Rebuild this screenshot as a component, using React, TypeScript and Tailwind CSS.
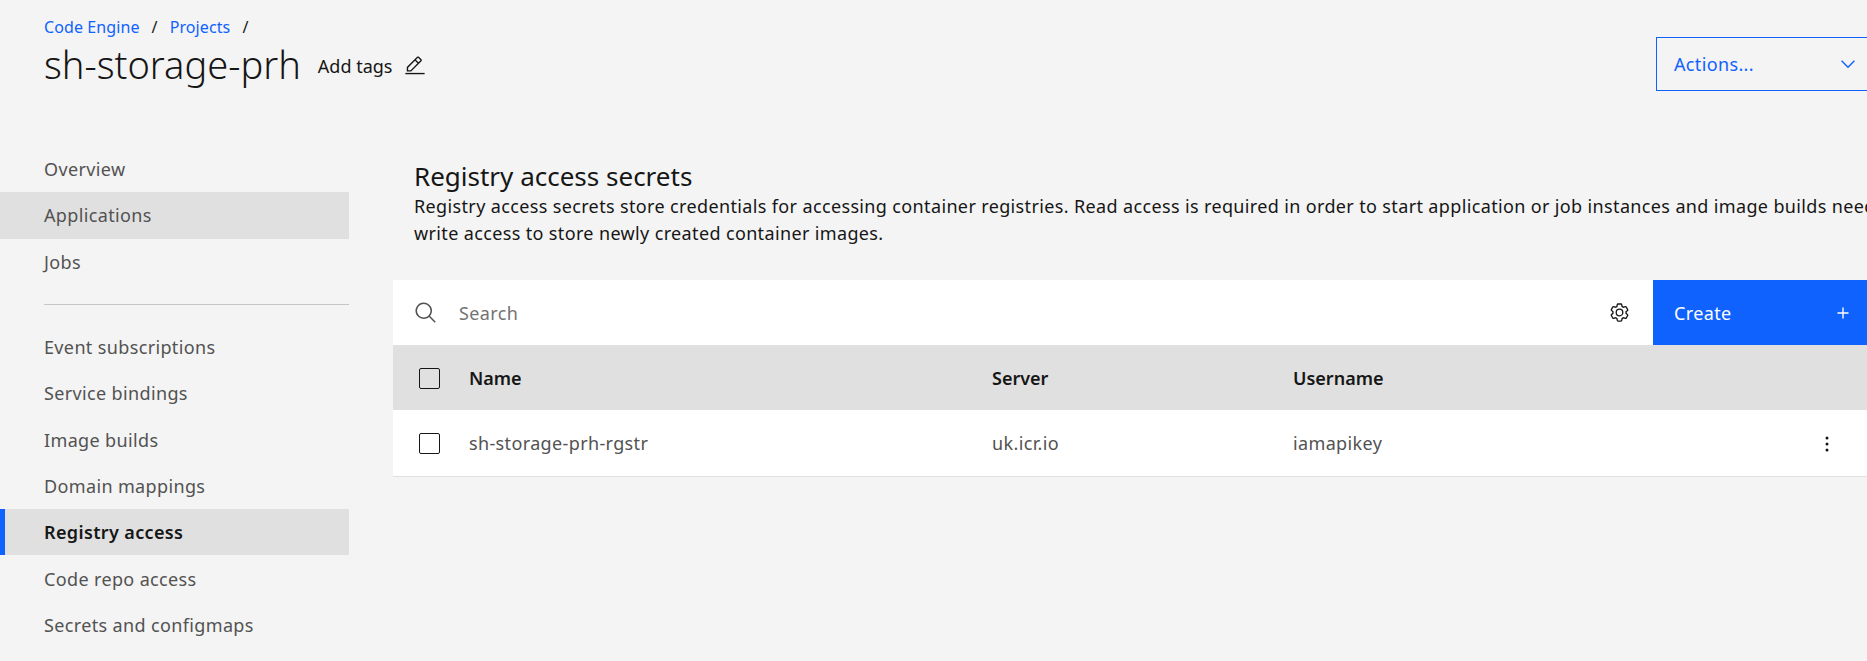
const primaryNav = [
  { label: 'Overview' },
  { label: 'Applications', hovered: true },
  { label: 'Jobs' },
]

const secondaryNav = [
  { label: 'Event subscriptions' },
  { label: 'Service bindings' },
  { label: 'Image builds' },
  { label: 'Domain mappings' },
  { label: 'Registry access', active: true },
  { label: 'Code repo access' },
  { label: 'Secrets and configmaps' },
]

// ─── Icons (Carbon shapes) ────────────────────────────────────────────────────

function Icon({ size, className, children }: { size: number; className?: string; children: React.ReactNode }) {
  return (
    <svg width={size} height={size} viewBox="0 0 32 32" fill="currentColor" className={`shrink-0 ${className ?? ''}`}>
      {children}
    </svg>
  )
}

const EditIcon = () => (
  <Icon size={22} className="ml-[12px] mt-[3px]">
    <path d="M2 26h28v2H2z" />
    <path d="M25.4 9c.8-.8.8-2 0-2.8l-3.6-3.6c-.8-.8-2-.8-2.8 0l-15 15V24h6.4l15-15zm-5-5L24 7.6l-3 3L17.4 7l3-3zM6 22v-3.6l10-10l3.6 3.6l-10 10H6z" />
  </Icon>
)

const SearchIcon = () => (
  <Icon size={24} className="ml-[21px] text-[#525252]">
    <path d="M29 27.5859l-7.5521-7.5521a11.0177 11.0177 0 1 0-1.4141 1.4141L27.5859 29ZM4 13a9 9 0 1 1 9 9A9.01 9.01 0 0 1 4 13Z" />
  </Icon>
)

const SettingsIcon = () => (
  <Icon size={21} className="mr-[23px]">
    <path d="M27,16.76c0-.25,0-.5,0-.76s0-.51,0-.77l1.92-1.68A2,2,0,0,0,29.3,11L26.94,7a2,2,0,0,0-1.73-1,2,2,0,0,0-.64.1l-2.43.82a11.35,11.35,0,0,0-1.31-.75l-.51-2.52a2,2,0,0,0-2-1.61H13.64a2,2,0,0,0-2,1.61l-.51,2.52a11.48,11.48,0,0,0-1.32.75L7.43,6.06A2,2,0,0,0,6.79,6,2,2,0,0,0,5.06,7L2.7,11a2,2,0,0,0,.41,2.51L5,15.24c0,.25,0,.5,0,.76s0,.51,0,.77L3.11,18.45A2,2,0,0,0,2.7,21L5.06,25a2,2,0,0,0,1.73,1,2,2,0,0,0,.64-.1l2.43-.82a11.35,11.35,0,0,0,1.31.75l.51,2.52a2,2,0,0,0,2,1.61h4.72a2,2,0,0,0,2-1.61l.51-2.52a11.48,11.48,0,0,0,1.32-.75l2.42.82a2,2,0,0,0,.64.1,2,2,0,0,0,1.73-1L29.3,21a2,2,0,0,0-.41-2.51ZM25.21,24l-3.43-1.16a8.86,8.86,0,0,1-2.71,1.57L18.36,28H13.64l-.71-3.55a9.36,9.36,0,0,1-2.7-1.57L6.79,24,4.43,20l2.72-2.4a8.9,8.9,0,0,1,0-3.13L4.43,12,6.79,8l3.43,1.16a8.86,8.86,0,0,1,2.71-1.57L13.64,4h4.72l.71,3.55a9.36,9.36,0,0,1,2.7,1.57L25.21,8,27.57,12l-2.72,2.4a8.9,8.9,0,0,1,0,3.13L27.57,20Z" />
    <path d="M16,22a6,6,0,1,1,6-6A5.94,5.94,0,0,1,16,22Zm0-10a3.91,3.91,0,0,0-4,4,3.91,3.91,0,0,0,4,4,3.91,3.91,0,0,0,4-4A3.91,3.91,0,0,0,16,12Z" />
  </Icon>
)

const ChevronIcon = () => (
  <Icon size={22}>
    <path d="M16 22L6 12l1.4-1.4 8.6 8.6 8.6-8.6L26 12z" />
  </Icon>
)

const PlusIcon = () => (
  <Icon size={22}>
    <path d="M17 15V8h-2v7H8v2h7v7h2v-7h7v-2z" />
  </Icon>
)

const OverflowIcon = () => (
  <Icon size={24} className="text-[#161616]">
    <circle cx="16" cy="8" r="2" />
    <circle cx="16" cy="16" r="2" />
    <circle cx="16" cy="24" r="2" />
  </Icon>
)

// ─── Parts ────────────────────────────────────────────────────────────────────

type NavItemProps = { label: string; hovered?: boolean; active?: boolean }

function NavItem({ label, hovered, active }: NavItemProps) {
  return (
    <div
      className={`flex h-[46.3px] items-center pt-px text-[18px] tracking-[0.36px] ${
        active
          ? 'border-l-[5px] border-[#0f62fe] bg-[#e0e0e0] pl-[39px] font-semibold text-[#161616]'
          : hovered
            ? 'bg-[#e0e0e0] pl-[44px] text-[#525252]'
            : 'pl-[44px] text-[#525252]'
      }`}
    >
      {label}
    </div>
  )
}

function Checkbox() {
  return <div className="h-[21px] w-[21px] rounded-[2px] border border-[#161616]" />
}

export default function App() {
  return (
    <div className="h-[661px] w-[1867px] overflow-hidden bg-[#f4f4f4] font-['Noto_Sans',sans-serif] text-[#161616]">
      {/* Page header */}
      <div className="flex h-[146px] justify-between pl-[44px]">
        <div>
          <div className="mt-[16px] flex h-[22px] items-center gap-[12px] text-[16px] tracking-[0.1px] text-[#0f62fe]">
            <span>Code Engine</span>
            <span className="text-[#161616]">/</span>
            <span>Projects</span>
            <span className="text-[#161616]">/</span>
          </div>
          <div className="mt-[4px] flex items-center">
            <h1 className="text-[38px] leading-[44px] font-light">sh-storage-prh</h1>
            <span className="ml-[17px] mt-[5px] text-[18px]">Add tags</span>
            <EditIcon />
          </div>
        </div>
        <div className="-mr-[9px] mt-[37px] flex h-[54px] w-[220px] shrink-0 items-center justify-between border border-[#0f62fe] pl-[17px] pr-[16px] text-[18px] tracking-[0.36px] text-[#0f62fe]">
          <span>Actions...</span>
          <ChevronIcon />
        </div>
      </div>

      <div className="flex">
        {/* Side nav */}
        <nav className="w-[349px] shrink-0">
          {primaryNav.map(item => (
            <NavItem key={item.label} {...item} />
          ))}
          <div className="mb-[19px] ml-[44px] mt-[19px] h-px bg-[#c6c6c6]" />
          {secondaryNav.map(item => (
            <NavItem key={item.label} {...item} />
          ))}
        </nav>

        {/* Main content */}
        <main className="ml-[44px] min-w-0 flex-1">
          <div className="pl-[21px]">
            <h2 className="mt-[13px] text-[26px] leading-[34px]">Registry access secrets</h2>
            <p className="whitespace-nowrap text-[18px] leading-[27px] tracking-[0.36px]">
              Registry access secrets store credentials for accessing container registries. Read access is required in order to start application or job instances and image builds need
              <br />
              write access to store newly created container images.
            </p>
          </div>

          {/* Toolbar */}
          <div className="mt-[33px] flex h-[65px] items-center bg-white">
            <SearchIcon />
            <span className="ml-[21px] flex-1 pt-px text-[18px] tracking-[0.36px] text-[#737373]">Search</span>
            <SettingsIcon />
            <div className="flex h-full w-[214px] items-center justify-between bg-[#0f62fe] pl-[21px] pr-[13px] pt-px text-[18px] tracking-[0.36px] text-white">
              <span>Create</span>
              <PlusIcon />
            </div>
          </div>

          {/* Table */}
          <div className="grid h-[65px] grid-cols-[76px_523px_301px_1fr] items-center bg-[#e0e0e0] pl-[26px] pt-px text-[18px] font-semibold">
            <Checkbox />
            <span className="-ml-[26px]">Name</span>
            <span className="-ml-[26px]">Server</span>
            <span className="-ml-[26px]">Username</span>
          </div>
          <div className="grid h-[67px] grid-cols-[76px_523px_301px_1fr_auto] items-center border-b border-[#e0e0e0] bg-white pl-[26px] pr-[28px] pt-px text-[18px] tracking-[0.36px] text-[#525252]">
            <Checkbox />
            <span className="-ml-[26px]">sh-storage-prh-rgstr</span>
            <span className="-ml-[26px]">uk.icr.io</span>
            <span className="-ml-[26px]">iamapikey</span>
            <OverflowIcon />
          </div>
        </main>
      </div>
    </div>
  )
}
